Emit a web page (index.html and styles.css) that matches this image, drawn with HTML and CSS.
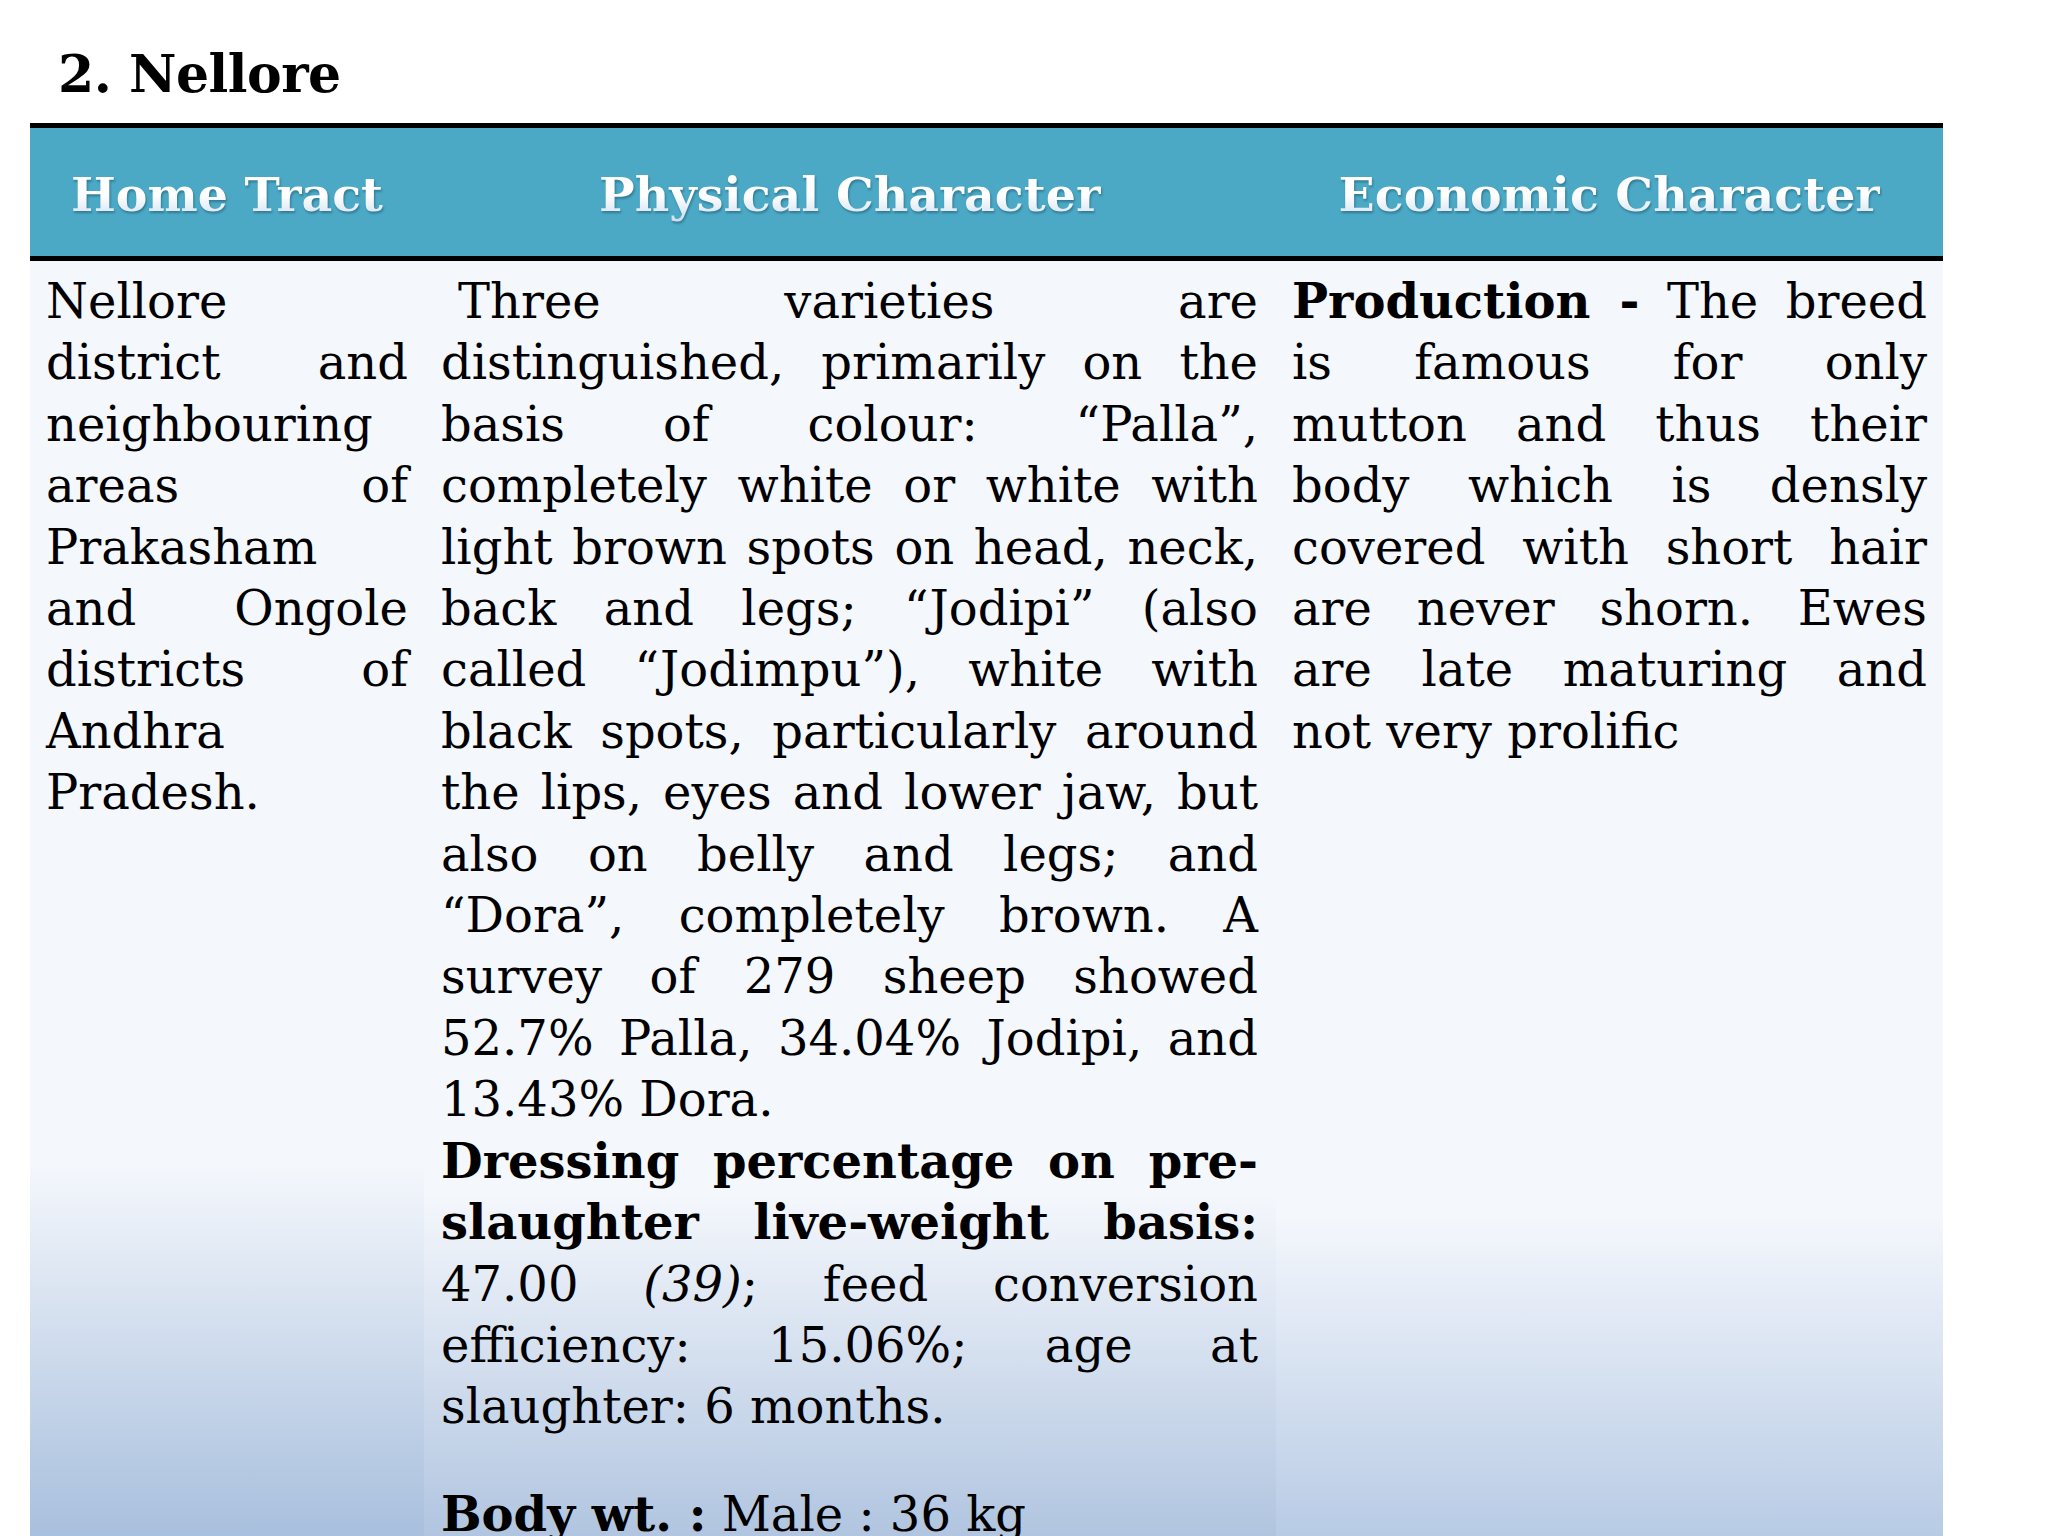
FILE: index.html
```html
<!DOCTYPE html>
<html lang="en">
<head>
<meta charset="utf-8">
<title>2. Nellore</title>
<link rel="stylesheet" href="styles.css">
</head>
<body>
<div class="page">
  <h1 class="title">2. Nellore</h1>
  <div class="breed-table">
    <div class="head-row">
      <div class="head-cell col-tract"><span class="head-text">Home Tract</span></div>
      <div class="head-cell col-phys"><span class="head-text">Physical Character</span></div>
      <div class="head-cell col-econ"><span class="head-text">Economic Character</span></div>
    </div>
    <div class="body-row">
      <div class="cell cell-tract">
        <span class="line">Nellore</span>
        <span class="line j">district and</span>
        <span class="line">neighbouring</span>
        <span class="line j">areas of</span>
        <span class="line">Prakasham</span>
        <span class="line j">and Ongole</span>
        <span class="line j">districts of</span>
        <span class="line">Andhra</span>
        <span class="line">Pradesh.</span>
      </div>
      <div class="cell cell-phys">
        <span class="line j indent">Three varieties are</span>
        <span class="line j">distinguished, primarily on the</span>
        <span class="line j">basis of colour: “Palla”,</span>
        <span class="line j">completely white or white with</span>
        <span class="line j">light brown spots on head, neck,</span>
        <span class="line j">back and legs; “Jodipi” (also</span>
        <span class="line j">called “Jodimpu”), white with</span>
        <span class="line j">black spots, particularly around</span>
        <span class="line j">the lips, eyes and lower jaw, but</span>
        <span class="line j">also on belly and legs; and</span>
        <span class="line j">“Dora”, completely brown. A</span>
        <span class="line j">survey of 279 sheep showed</span>
        <span class="line j">52.7% Palla, 34.04% Jodipi, and</span>
        <span class="line">13.43% Dora.</span>
        <span class="line j"><b>Dressing percentage on pre-</b></span>
        <span class="line j"><b>slaughter live-weight basis:</b></span>
        <span class="line j">47.00 <i>(39)</i>; feed conversion</span>
        <span class="line j">efficiency: 15.06%; age at</span>
        <span class="line">slaughter: 6 months.</span>
        <span class="line gap"><b>Body wt. :</b> Male : 36 kg</span>
      </div>
      <div class="cell cell-econ">
        <span class="line j"><b>Production -</b> The breed</span>
        <span class="line j">is famous for only</span>
        <span class="line j">mutton and thus their</span>
        <span class="line j">body which is densly</span>
        <span class="line j">covered with short hair</span>
        <span class="line j">are never shorn. Ewes</span>
        <span class="line j">are late maturing and</span>
        <span class="line">not very prolific</span>
      </div>
    </div>
  </div>
</div>
</body>
</html>
```
FILE: styles.css
```css
html, body {
  margin: 0;
  padding: 0;
  height: 1536px;
  overflow: hidden;
  background: #ffffff;
}

.page {
  height: 1536px;
  padding: 44px 0 0 30px;
  box-sizing: border-box;
  display: flex;
  flex-direction: column;
  font-family: "DejaVu Serif", "Liberation Serif", serif;
  color: #000;
}

.title {
  margin: 0 0 19px 28px;
  font-size: 52px;
  line-height: 60px;
  font-weight: bold;
  letter-spacing: -0.5px;
}

.breed-table {
  width: 1913px;
  flex: 1;
  display: flex;
  flex-direction: column;
}

.head-row {
  display: grid;
  grid-template-columns: 394px 852px 667px;
  height: 128px;
  background: #4ba9c6;
  border-top: 5px solid #000;
  border-bottom: 5px solid #000;
}

.head-cell {
  display: flex;
  align-items: center;
  justify-content: center;
}

.head-text {
  font-size: 47.5px;
  font-weight: bold;
  background: linear-gradient(to bottom, #ffffff 0%, #ffffff 55%, #cadcec 100%);
  -webkit-background-clip: text;
  background-clip: text;
  color: transparent;
  filter: drop-shadow(1px 2px 1px rgba(10, 50, 70, 0.4));
  padding-top: 4px;
}

.body-row {
  flex: 1;
  display: grid;
  grid-template-columns: 394px 852px 667px;
}

.cell {
  padding: 10px 16px 0 16px;
  font-size: 48px;
  line-height: 61.4px;
}

.cell-tract {
  background: linear-gradient(to bottom, #f4f7fc 0, #f4f7fc 905px, #a8bfdd 1275px);
}

.cell-phys {
  padding-left: 17px;
  padding-right: 18px;
  background: linear-gradient(to bottom, #f4f7fc 0, #f4f7fc 935px, #b1c5e0 1275px);
}

.cell-econ {
  background: linear-gradient(to bottom, #f4f7fc 0, #f4f7fc 955px, #b8cbe5 1275px);
}

.line {
  display: block;
  white-space: nowrap;
  text-align: left;
}

.line.j {
  white-space: normal;
  text-align: justify;
  text-align-last: justify;
}

.line.indent {
  text-indent: 17px;
}

.line.gap {
  margin-top: 46px;
}
```
